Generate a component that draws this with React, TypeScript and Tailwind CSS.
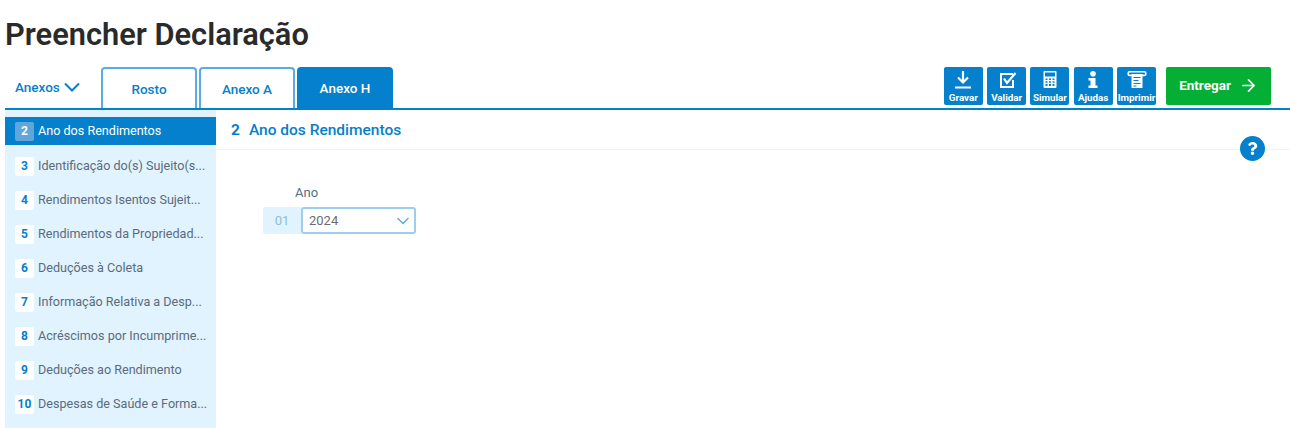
import { ArrowRight, ChevronDown } from 'lucide-react';
import { FaQuestion } from 'react-icons/fa';

const GravarIcon = () => (
    <svg width="20" height="20" viewBox="0 0 20 20" fill="none" stroke="white" strokeWidth="2.200">
        <path d="M10 0v11M5 6.500l5 5 5-5" />
        <path d="M2 16.500h16" strokeWidth="2" />
    </svg>
);

const ValidarIcon = () => (
    <svg width="20" height="20" viewBox="0 0 20 20" fill="none" stroke="white" strokeWidth="2">
        <path d="M16 9v7H4V3h12" />
        <path d="M7 7.500l3 4.500L18.500 2" strokeWidth="2.200" />
    </svg>
);

const SimularIcon = () => (
    <svg width="20" height="20" viewBox="0 0 20 20" fill="white">
        <path fillRule="evenodd" d="M4.500 0h11a1 1 0 0 1 1 1v15a1 1 0 0 1-1 1h-11a1 1 0 0 1-1-1V1a1 1 0 0 1 1-1zm.500 1.500v4h10v-4zM5.500 7.500V9h2V7.500zm3.500 0V9h2V7.500zm3.500 0V9h2V7.500zM5.500 10.250v1.500h2v-1.500zm3.500 0v1.500h2v-1.500zm3.500 0v1.500h2v-1.500zM5.500 13v2h2v-2zm3.500 0v2h2v-2zm3.500 0v2h2v-2z" />
    </svg>
);

const AjudasIcon = () => (
    <svg width="20" height="20" viewBox="0 0 20 20" fill="white">
        <circle cx="10" cy="2.800" r="2.800" />
        <path d="M5.500 7h7v7.500h2V17h-9v-2.500h2V9.500h-2z" />
    </svg>
);

const ImprimirIcon = () => (
    <svg width="20" height="20" viewBox="0 0 20 20" fill="none" stroke="white">
        <rect x="1.200" y="0.800" width="17.600" height="3.600" rx="1.500" strokeWidth="1.600" />
        <path d="M4.500 3h11v14h-11z" fill="white" stroke="none" />
        <path d="M6.500 6.500h7M6.500 9.500h5M6.500 12.500h7M6.500 15h3" stroke="#0580cc" strokeWidth="1.200" />
    </svg>
);

const actions = [
    { label: 'Gravar', icon: <GravarIcon /> },
    { label: 'Validar', icon: <ValidarIcon /> },
    { label: 'Simular', icon: <SimularIcon /> },
    { label: 'Ajudas', icon: <AjudasIcon /> },
    { label: 'Imprimir', icon: <ImprimirIcon /> },
];

const sections = [
    { n: 3, name: 'Identificação do(s) Sujeito(s...' },
    { n: 4, name: 'Rendimentos Isentos Sujeit...' },
    { n: 5, name: 'Rendimentos da Propriedad...' },
    { n: 6, name: 'Deduções à Coleta' },
    { n: 7, name: 'Informação Relativa a Desp...' },
    { n: 8, name: 'Acréscimos por Incumprime...' },
    { n: 9, name: 'Deduções ao Rendimento' },
    { n: 10, name: 'Despesas de Saúde e Forma...' },
];

const App = () => {
    return (
        <div className="relative w-[1290px] h-[428px] overflow-hidden bg-white pl-[5px] font-['Roboto',sans-serif]">
            <h1 className="h-[67px] pt-[15px] text-[30.800px] leading-[40px] font-semibold text-[#2a2a2a]">Preencher Declaração</h1>

            {/* Tabs e ações */}
            <div className="flex h-[43px] border-b-2 border-[#0580cc]">
                <button className="flex items-center w-[96px] h-[41px] pl-[10px] gap-[4px] text-[13.500px] font-medium text-[#0580cc]">
                    Anexos
                    <svg width="16" height="10" viewBox="0 0 16 10" fill="none" stroke="currentColor" strokeWidth="2" className="-mt-[2px]">
                        <path d="M1 1.500l7 7 7-7" />
                    </svg>
                </button>
                <div className="flex gap-[2px]">
                    <div className="flex items-center justify-center w-[96px] h-[41px] pt-[2px] rounded-t-[4px] border-2 border-b-0 border-[#5aace4] text-[13.500px] font-medium text-[#0580cc]">Rosto</div>
                    <div className="flex items-center justify-center w-[96px] h-[41px] pt-[2px] rounded-t-[4px] border-2 border-b-0 border-[#5aace4] text-[13.500px] font-medium text-[#0580cc]">Anexo A</div>
                    <div className="flex items-center justify-center w-[96px] h-[41px] pt-[2px] rounded-t-[4px] bg-[#0580cc] text-[13.500px] font-medium text-white">Anexo H</div>
                </div>
                <div className="ml-auto mr-[19px] flex items-start">
                    <div className="flex gap-[4.300px]">
                        {actions.map((a) => (
                            <div key={a.label} className="flex flex-col items-center justify-between w-[39px] h-[38px] rounded-[2px] bg-[#0580cc] pt-[4px] pb-[1px]">
                                <div className="flex items-center justify-center h-[20px]">{a.icon}</div>
                                <span className="text-[9.800px] leading-[12px] font-bold text-white whitespace-nowrap">{a.label}</span>
                            </div>
                        ))}
                    </div>
                    <button className="flex items-center justify-center gap-[8px] ml-[10px] w-[105px] h-[38px] pb-[2px] rounded-[2px] bg-[#05ae35] text-[13.500px] font-bold text-white">
                        Entregar
                        <ArrowRight size={19} strokeWidth={2.200} />
                    </button>
                </div>
            </div>

            <div className="flex">
                {/* Quadros */}
                <div className="w-[211px] h-[318px] shrink-0 bg-[#e1f3fe] pt-[7px]">
                    <div className="flex items-center h-[28px] bg-[#0580cc] pl-[10px] text-white">
                        <span className="flex items-center justify-center w-[19px] h-[19px] rounded-[2px] bg-[#5fa7db] text-[12px] font-bold">2</span>
                        <span className="ml-[4px] text-[12.600px]">Ano dos Rendimentos</span>
                    </div>
                    <div className="flex flex-col mt-[4px]">
                        {sections.map((s) => (
                            <div key={s.n} className="flex items-center h-[34px] pl-[10px]">
                                <span className="flex items-center justify-center w-[19px] h-[19px] shrink-0 rounded-[2px] bg-white text-[12px] font-bold text-[#0580cc]">{s.n}</span>
                                <span className="ml-[4px] whitespace-nowrap text-[12.600px] text-[#5b6b7c]">{s.name}</span>
                            </div>
                        ))}
                    </div>
                </div>

                {/* Conteúdo */}
                <div className="flex-1">
                    <div className="flex items-center h-[40px] pl-[15px] pt-[2px] gap-[9px] border-b border-[#e9f6fd] text-[15.500px] font-medium text-[#0580cc]">
                        <span className="font-bold">2</span>
                        <span>Ano dos Rendimentos</span>
                    </div>
                    <div className="pl-[47px] pt-[35px]">
                        <div className="pl-[32px] text-[13px] leading-[15px] text-[#4f6f86]">Ano</div>
                        <div className="flex mt-[7px]">
                            <div className="flex items-center justify-center w-[38px] h-[27px] rounded-l-[2px] bg-[#e1f3fe] text-[13px] text-[#8cc0dd]">01</div>
                            <div className="flex items-center justify-between w-[115px] h-[27px] rounded-[3px] border-2 border-[#9fcdee] pl-[6px] pr-[1px] text-[13px] text-[#6b6b6b]">
                                2024
                                <ChevronDown size={20} strokeWidth={2} className="text-[#6aaedd]" />
                            </div>
                        </div>
                    </div>
                </div>
            </div>

            {/* Ajuda */}
            <div className="absolute left-[1240px] top-[136px] flex items-center justify-center w-[25px] h-[25px] rounded-full bg-[#0580cc]">
                <FaQuestion className="text-white text-[13px]" />
            </div>
        </div>
    );
};

export default App;
